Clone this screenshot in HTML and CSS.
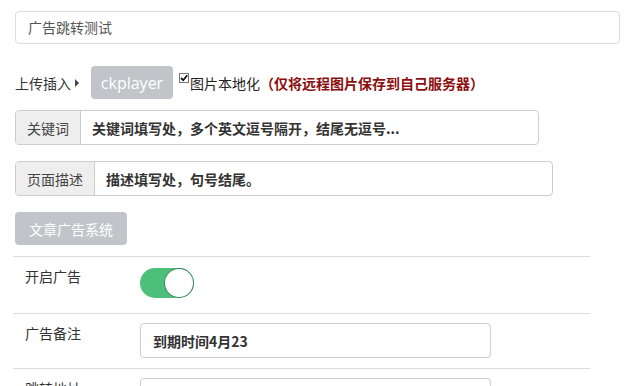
FILE: index.html
```html
<!DOCTYPE html>
<html lang="zh">
<head>
<meta charset="utf-8">
<link rel="stylesheet" href="styles.css">
</head>
<body>
<div class="page">
  <div class="title-input">广告跳转测试</div>

  <div class="upload-row">
    <span class="upload-label">上传插入</span>
    <span class="caret"></span>
    <span class="btn btn-player">ckplayer</span>
    <span class="check"><svg width="10" height="10" viewBox="0 0 10 10"><rect x="0.5" y="0.5" width="9" height="9" fill="#fff" stroke="#777"/><path d="M2 5 L4.2 7.2 L8.2 2.2" fill="none" stroke="#111" stroke-width="1.8"/></svg></span>
    <span class="check-text">图片本地化</span>
    <span class="note">（仅将远程图片保存到自己服务器）</span>
  </div>

  <div class="group group-kw">
    <span class="addon">关键词</span>
    <span class="group-input">关键词填写处，多个英文逗号隔开，结尾无逗号...</span>
  </div>

  <div class="group group-desc">
    <span class="addon">页面描述</span>
    <span class="group-input">描述填写处，句号结尾。</span>
  </div>

  <div class="btn btn-system">文章广告系统</div>

  <div class="table">
    <div class="row row-toggle">
      <div class="cell-label">开启广告</div>
      <div class="cell-value"><span class="toggle"><span class="knob"></span></span></div>
    </div>
    <div class="row">
      <div class="cell-label">广告备注</div>
      <div class="cell-value"><div class="text-input">到期时间4月23</div></div>
    </div>
    <div class="row">
      <div class="cell-label">跳转地址</div>
      <div class="cell-value"><div class="text-input"></div></div>
    </div>
  </div>
</div>
</body>
</html>
```

FILE: styles.css
```css
* { box-sizing: border-box; }
html, body { margin: 0; padding: 0; background: #fff; }
body {
  font-family: "Microsoft YaHei", "Noto Sans CJK SC", sans-serif;
  font-size: 14px;
  color: #333;
  overflow: hidden;
}
.page {
  padding: 11px 6px 0 15px;
  width: 626px;
}
.title-input {
  height: 33px;
  border: 1px solid #ddd;
  border-radius: 4px;
  padding: 0 12px;
  line-height: 31px;
  color: #555;
  font-size: 14px;
}
.upload-row {
  display: flex;
  align-items: center;
  margin-top: 22px;
  height: 33px;
}
.upload-label { color: #333; }
.caret {
  width: 0; height: 0;
  border-top: 4px solid transparent;
  border-bottom: 4px solid transparent;
  border-left: 4px solid #444;
  margin: 0 12px 0 4px;
}
.btn {
  display: inline-flex;
  align-items: center;
  justify-content: center;
  background: #c1c5c9;
  color: #fff;
  border-radius: 4px;
  height: 33px;
}
.btn-player {
  width: 82px;
  font-family: "Open Sans", "Noto Sans", sans-serif;
  font-size: 16px;
}
.check {
  display: inline-flex;
  margin: -10px 1px 0 6px;
}
.check-text { color: #222; }
.note { color: #8b0f0f; font-weight: bold; }
.group {
  display: flex;
  height: 35px;
  border: 1px solid #ccc;
  border-radius: 4px;
  overflow: hidden;
}
.group-kw { margin-top: 11px; width: 524px; }
.group-desc { margin-top: 16px; width: 538px; height: 35px; }
.addon {
  background: #eee;
  border-right: 1px solid #ccc;
  padding: 0 11px;
  display: flex;
  align-items: center;
  color: #444;
}
.group-input {
  display: flex;
  align-items: center;
  padding: 0 11px;
  font-weight: bold;
  color: #333;
}
.btn-system {
  margin-top: 16px;
  width: 112px;
  font-size: 14px;
}
.table {
  margin: 11px 0 0 -2px;
  width: 577px;
  border-top: 1px solid #ddd;
}
.row {
  display: flex;
  border-bottom: 1px solid #ddd;
  height: 55px;
}
.row-toggle { height: 57px; }
.cell-label {
  width: 127px;
  padding: 12px 0 0 12px;
  color: #333;
  line-height: 17px;
}
.row .cell-label { padding-top: 11px; }
.cell-value { padding-top: 9px; }
.row-toggle .cell-value { padding-top: 11px; }
.toggle {
  display: block;
  width: 54px;
  height: 30px;
  border-radius: 15px;
  background: #4cbf7a;
  position: relative;
}
.knob {
  position: absolute;
  right: 1px;
  top: 1px;
  width: 28px;
  height: 28px;
  border-radius: 50%;
  background: #fff;
  box-shadow: 0 0 0 1px #3d8c5c;
}
.text-input {
  width: 351px;
  height: 35px;
  border: 1px solid #ccc;
  border-radius: 4px;
  padding: 0 12px;
  display: flex;
  align-items: center;
  font-weight: bold;
  color: #333;
}
```
